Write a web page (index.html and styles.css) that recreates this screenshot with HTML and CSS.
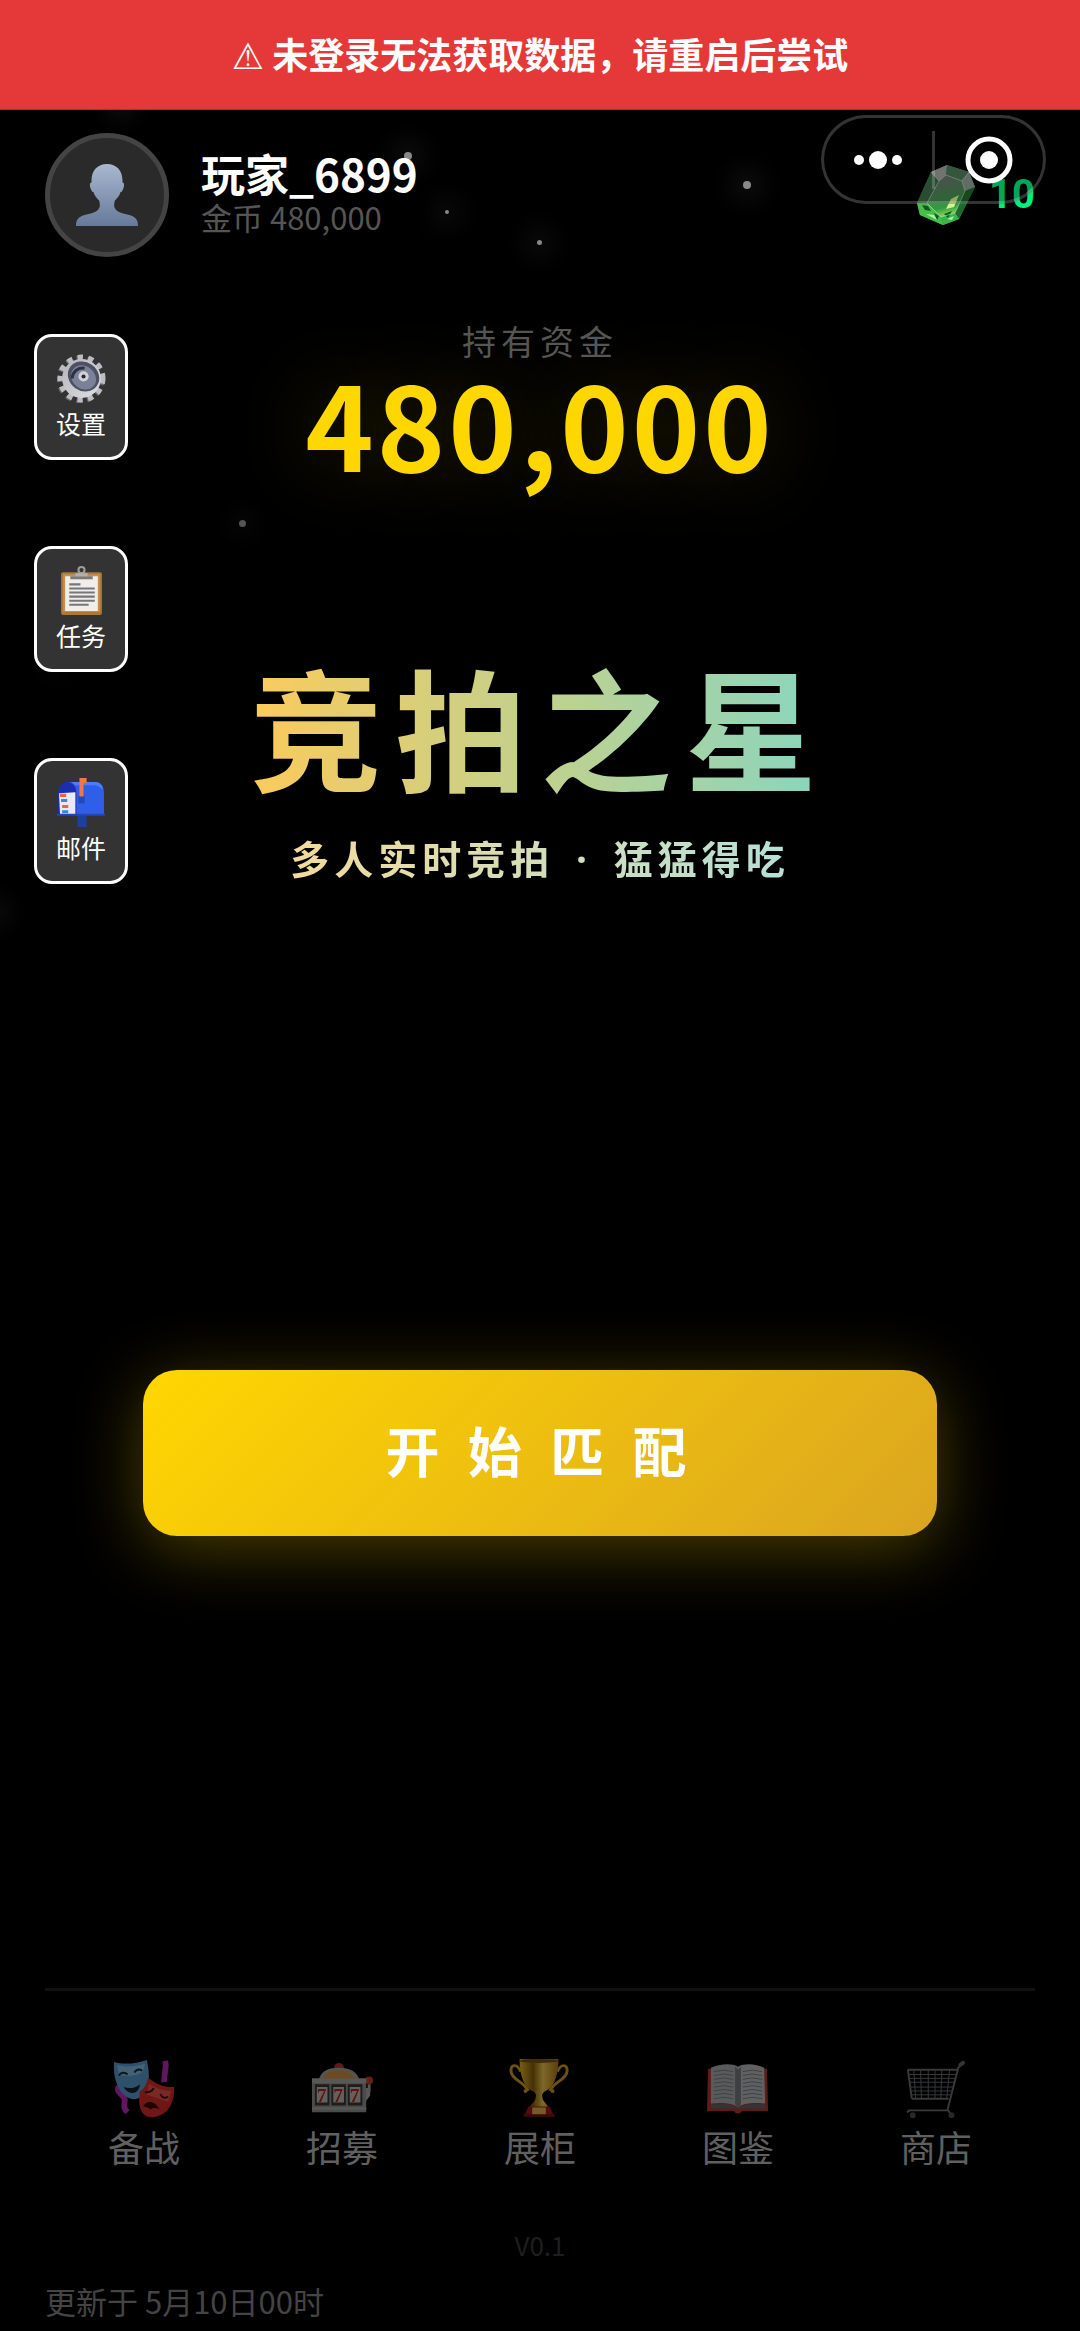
FILE: index.html
```html
<!DOCTYPE html>
<html lang="zh-CN">
<head>
<meta charset="utf-8">
<meta name="viewport" content="width=device-width, initial-scale=1">
<title>竞拍之星</title>
<link rel="stylesheet" href="styles.css">
</head>
<body>
<div class="page">
  <div class="stars" aria-hidden="true">
    <i class="star star-1"></i><i class="star star-2"></i><i class="star star-3"></i><i class="star star-4"></i>
    <i class="star star-5"></i><i class="star star-6"></i><i class="star star-7"></i><i class="star star-8"></i>
  </div>

  <div class="banner" role="alert"><span class="banner-mark">⚠</span> 未登录无法获取数据，请重启后尝试</div>

  <header class="header">
    <div class="avatar">
      <svg viewBox="0 0 64 64" aria-hidden="true">
        <defs><linearGradient id="person" x1="0" y1="0" x2="0" y2="1"><stop offset="0" stop-color="#a9b8d0"/><stop offset="1" stop-color="#67799a"/></linearGradient></defs>
        <path fill="url(#person)" d="M32 0c10 0 16 7 16 17v2c2 0 2 3 1 6-1 3-2 4-3 4-1 4-4 7-6 9-1 4-1 7 1 9 3 4 10 4 15 6 6 2 8 5 8 11H0c0-6 2-9 8-11 5-2 12-2 15-6 2-2 2-5 1-9-2-2-5-5-6-9-1 0-2-1-3-4-1-3-1-6 1-6v-2C16 7 22 0 32 0z"/>
      </svg>
    </div>
    <div class="player">
      <div class="player-name">玩家_6899</div>
      <div class="player-coins">金币 480,000</div>
    </div>
    <div class="gems">
      <svg class="gem" viewBox="0 0 58 60" aria-hidden="true">
        <defs>
          <linearGradient id="gem" x1=".6" y1="0" x2=".4" y2="1"><stop offset="0" stop-color="#7d8f86"/><stop offset=".45" stop-color="#3a8a4a"/><stop offset="1" stop-color="#2fb344"/></linearGradient>
          <linearGradient id="table" x1=".4" y1="0" x2=".6" y2="1"><stop offset="0" stop-color="#6f7274"/><stop offset=".45" stop-color="#4d8a58"/><stop offset=".75" stop-color="#2f9b3e"/><stop offset="1" stop-color="#a4e060"/></linearGradient>
        </defs>
        <path fill="url(#gem)" d="M30 0l22 7 6 15-16 32-16 6L3 50 0 38 14 7z"/>
        <path fill="#a2a5a3" d="M30 0L14 7l8 9 7-6z"/>
        <path fill="#4c7a5a" d="M30 0l22 7-7 9-16-6z"/>
        <path fill="#8f9a92" d="M52 7l6 15-10 4-3-10z"/>
        <path fill="#3c6d4a" d="M14 7l8 9L10 38H0z"/>
        <path fill="url(#table)" d="M22 16l7-6 16 6 3 10-10 22-14 4-14-14z"/>
        <path fill="#1c6a2c" d="M48 26l10-4-16 32-4-6z"/>
        <path fill="#48bd48" d="M0 38h10l14 14 2 8L3 50z"/>
        <path fill="#38b64a" d="M24 52l14-4 4 6-16 6z"/>
        <path fill="#0f5a22" d="M5 40l6 1 3 5-6-1zM17 48l5 3-2 4zM27 49l8-3-4 7z"/>
        <path fill="#d0f58c" d="M34 34l8-4-5 12-8 2z"/>
        <path fill="#a6f7a0" d="M9 49l8 1 3 5zM30 54l7-3-2 4z"/>
        <path fill="none" stroke="#d5efd5" stroke-opacity=".5" d="M22 16l7-6 16 6 3 10-10 22-14 4-14-14zM14 7l8 9M52 7l-7 9"/>
      </svg>
      <span class="gem-count">10</span>
    </div>
  </header>

  <div class="capsule">
    <button type="button" aria-label="更多">
      <svg viewBox="0 0 48 48" aria-hidden="true"><circle cx="5" cy="24" r="5"/><circle cx="24" cy="24" r="9"/><circle cx="43" cy="24" r="5"/></svg>
    </button>
    <button type="button" aria-label="关闭">
      <svg viewBox="0 0 48 48" aria-hidden="true"><circle cx="24" cy="24" r="21" fill="none" stroke="#fff" stroke-width="5"/><circle cx="24" cy="24" r="9"/></svg>
    </button>
  </div>

  <main class="stage">
    <aside class="side">
      <button type="button" class="side-button">
        <svg viewBox="0 0 48 48" aria-hidden="true">
          <defs><linearGradient id="steel" x1="0" y1="0" x2="1" y2="1"><stop offset="0" stop-color="#b4b4ba"/><stop offset="1" stop-color="#dedee3"/></linearGradient></defs>
          <circle cx="23" cy="25" r="20" fill="none" stroke="#6c6c72" stroke-width="7" stroke-dasharray="5 5"/>
          <circle cx="24" cy="24" r="20" fill="none" stroke="#bcbcc3" stroke-width="7" stroke-dasharray="5 5"/>
          <circle cx="24" cy="24" r="19" fill="url(#steel)"/>
          <ellipse cx="26" cy="22" rx="16" ry="14" fill="#4d5163" transform="rotate(35 26 22)"/>
          <ellipse cx="26" cy="23" rx="13" ry="11" fill="#7b8298" transform="rotate(40 26 23)"/>
          <path d="M15 24a10 10 0 0 1 12-10" fill="none" stroke="#2e3244" stroke-width="3"/>
          <circle cx="26" cy="22" r="5" fill="#d0d0d6"/><circle cx="26" cy="22" r="2" fill="#26262c"/>
        </svg>
        <span>设置</span>
      </button>
      <button type="button" class="side-button">
        <svg viewBox="0 0 48 48" aria-hidden="true">
          <rect x="4" y="6" width="40" height="42" rx="2" fill="#a9783a"/>
          <rect x="6" y="8" width="36" height="37" fill="#c2914d"/>
          <path fill="#f0eeea" d="M8 10h32v34H8z"/>
          <path fill="#7b7b78" d="M13 10h22v3H13z"/>
          <circle cx="24" cy="4" r="3" fill="none" stroke="#9aa096" stroke-width="2"/>
          <path fill="#b0b3ab" d="M18 7h12v3H18z"/>
          <path stroke="#77777a" stroke-width="2" d="M12 18h11M12 22h25M12 26h25M12 30h25M12 34h25M12 38h19"/>
        </svg>
        <span>任务</span>
      </button>
      <button type="button" class="side-button">
        <svg viewBox="0 0 48 48" aria-hidden="true">
          <path fill="#1d3f9e" d="M20 34h9v14h-9z"/>
          <path fill="#2f5fe8" d="M10 4h27c7 0 9 5 9 11v19l1 2H18V14z"/>
          <path fill="#4c7cff" d="M14 4h23c5 0 8 3 8 8-3-4-6-5-10-5H18z"/>
          <path fill="#1b2fae" d="M1 35V15C1 8 5 4 10 4s9 4 9 11v21z"/>
          <path fill="#e9eaf5" d="M2 15l16-1v22H3z"/>
          <path stroke="#e4664b" stroke-width="3" d="M3 17h6M5 28h6"/>
          <path stroke="#3d84dd" stroke-width="3" d="M4 22h6M5 33h6"/>
          <path fill="#2448b8" d="M21 17h6v8h-6z"/>
          <path fill="#ef7848" d="M22 0h7v5h-3v13h-4z"/>
          <path stroke="#2346bf" stroke-width="2" d="M0 36h47"/>
        </svg>
        <span>邮件</span>
      </button>
    </aside>

    <section class="hero">
      <div class="funds-label">持有资金</div>
      <div class="funds">480,000</div>
      <h1 class="title">竞拍之星</h1>
      <p class="tagline">多人实时竞拍 <span class="dot">·</span> 猛猛得吃</p>
    </section>
  </main>

  <button type="button" class="start">开 始 匹 配</button>

  <footer class="footer">
    <nav class="tabs">
      <button type="button" class="tab">
        <svg viewBox="0 0 64 64" aria-hidden="true">
          <path fill="none" stroke="#c22fc0" stroke-width="6" d="M54 2c2 9-2 12-1 22M6 28c-4 9 8 8 6 16-1 6 0 8 3 11"/>
          <path fill="#5aa2d6" d="M1 3c10 3 22 2 34-2 3 16 4 28-5 37-4 4-11 5-16 1C4 32 0 18 1 3z"/>
          <path fill="#86c4ec" d="M4 6c9 3 19 2 29-1-1 5-2 8-5 10-8 3-16 3-22 1z"/>
          <path fill="none" stroke="#152a40" stroke-width="2" d="M6 17c2-3 6-4 9-1M22 14c2-3 5-4 8-2"/>
          <path fill="#14202e" d="M11 29c6 2 12 1 17-3-1 6-4 9-8 9s-7-2-9-6z"/>
          <path fill="#dd2f2c" d="M28 33c5-3 7-8 8-14 8 7 17 10 27 10 1 14-5 30-22 31-12 1-16-12-13-27z"/>
          <path fill="#ef5548" d="M37 25c7 5 14 8 23 8l-3 11-22-7z"/>
          <path fill="none" stroke="#4c0d0d" stroke-width="2" d="M33 34c4 1 8-1 9-4M49 36c1 4 5 5 8 3"/>
          <path fill="#3d0a0a" d="M31 49c4-7 12-6 17 3-4-2-7-2-9 0-3-2-5-3-8-3z"/>
        </svg>
        <span>备战</span>
      </button>
      <button type="button" class="tab">
        <svg viewBox="0 0 64 64" aria-hidden="true">
          <circle cx="29" cy="9" r="5" fill="#cf2f2c"/>
          <path fill="#a9a8a5" d="M8 22C10 12 18 9 29 9s19 4 21 13z"/>
          <path fill="#de9140" d="M12 21c3-7 9-9 17-9s14 3 17 9z"/>
          <path fill="#aeb0b0" d="M56 30h5v8l-5 6z"/><path fill="none" stroke="#aaa" stroke-width="3" d="M60 34v-8"/>
          <circle cx="60" cy="22" r="4" fill="#d83a35"/>
          <path fill="#949593" d="M1 20h56v35H1z"/>
          <path fill="#b0b0ad" d="M1 20h56v5H1zM1 50h56v2H1z"/>
          <path fill="#3a3b3b" d="M4 26h15v22H4zM21 26h15v22H21zM38 26h15v22H38z"/>
          <path fill="#c4c2be" d="M6 29h11v16H6zM23 29h11v16H23zM40 29h11v16H40z"/>
          <g class="reel"><text x="11" y="44">7</text><text x="28" y="44">7</text><text x="45" y="44">7</text></g>
        </svg>
        <span>招募</span>
      </button>
      <button type="button" class="tab">
        <svg viewBox="0 0 64 64" aria-hidden="true">
          <defs><linearGradient id="gold"><stop offset="0" stop-color="#f0bc2b"/><stop offset=".35" stop-color="#8d620c"/><stop offset=".6" stop-color="#f8d052"/><stop offset="1" stop-color="#b47e12"/></linearGradient></defs>
          <path fill="none" stroke="#d8a125" stroke-width="3" d="M12 13c-4-9-10-7-10-1 0 9 13 11 18 21M50 13c4-9 10-7 10-1 0 9-13 11-18 21"/>
          <path fill="url(#gold)" d="M11 0h40c0 16-4 30-15 34l-2 3 1 5 6 8H21l6-8 1-5-2-3C15 30 11 16 11 0z"/>
          <ellipse cx="31" cy="2" rx="20" ry="2" fill="#805a10"/>
          <circle cx="17" cy="33" r="2" fill="#d8a125"/><circle cx="45" cy="33" r="2" fill="#d8a125"/>
          <path fill="#a3191c" d="M20 49h22l4 9H16z"/><path fill="#6f1114" d="M15 57h32v3H15z"/>
          <path fill="#e5b74e" d="M24 50h14v7H24z"/>
        </svg>
        <span>展柜</span>
      </button>
      <button type="button" class="tab">
        <svg viewBox="0 0 64 64" aria-hidden="true">
          <path fill="#b93830" d="M1 10h61l1 44H36c-2 3-6 3-8 0H0z"/>
          <path fill="#66696c" d="M4 47c12-1 22-1 28 4 6-5 16-5 28-4v4H4z"/>
          <path fill="#b2b4b6" d="M4 9c9-4 22-5 28-1v42c-6-5-18-5-28-4z"/>
          <path fill="#bfc0c2" d="M32 8c7-4 19-3 27 1l1 37c-11-1-22-1-28 4z"/>
          <path fill="#7b7e81" d="M29 8l3 3 3-3v39l-3 4-3-4z"/>
          <path fill="none" stroke="#7c7f83" d="M7 13q11-3 20 0M7 17q11-3 20 0M7 21q11-3 20 0M7 25q11-3 20 0M7 29q11-3 20 0M7 33q11-3 20 0M7 37q11-3 20 0M7 41q11-3 20 0M37 13q9-3 20 0M37 17q9-3 20 0M37 21q9-3 20 0M37 25q9-3 20 0M37 29q9-3 20 0M37 33q9-3 20 0M37 37q9-3 20 0M37 41q9-3 20 0"/>
        </svg>
        <span>图鉴</span>
      </button>
      <button type="button" class="tab">
        <svg viewBox="0 0 64 64" aria-hidden="true">
          <g fill="none" stroke="#707276">
            <path stroke-width="2" d="M3 11h52M7 41h38M3 53h41M2 55l3-2M3 11l4 30"/>
            <path d="M4 16h49M5 20h47M5 24h46M6 29h43M6 33h42M7 37h40M9 11l2 30M16 11l1 30M24 11v30M31 11v30M38 11l-1 30M46 11l-3 30"/>
            <path stroke-width="2" d="M60 4l-5 5-11 43 3 5"/>
          </g>
          <path stroke="#66686b" stroke-width="4" stroke-linecap="round" d="M57 6l3-2"/>
          <circle cx="8" cy="58" r="3" fill="#4e5052"/><circle cx="48" cy="58" r="3" fill="#4e5052"/>
        </svg>
        <span>商店</span>
      </button>
    </nav>
    <div class="version">V0.1</div>
    <div class="updated">更新于 5月10日00时</div>
  </footer>
</div>
</body>
</html>
```
FILE: styles.css
```css
* { box-sizing: border-box; }

body {
  margin: 0;
  background: #000;
  color: #fff;
  font-family: "Noto Sans CJK SC", sans-serif;
}

button {
  margin: 0;
  padding: 0;
  border: 0;
  background: none;
  color: inherit;
  font: inherit;
}

svg { display: block; }

.page {
  position: relative;
  display: flex;
  flex-direction: column;
  min-height: 100vh;
  overflow: hidden;
}

/* Star field behind the content */
.stars { position: absolute; inset: 0; }

.star {
  position: absolute;
  width: 8px;
  height: 8px;
  border-radius: 50%;
  background: #888;
  box-shadow: 0 0 28px 6px rgba(255, 255, 255, .16);
}

.star-1 { left: 404px; top: 152px; }
.star-2 { left: 445px; top: 210px; width: 4px; height: 4px; }
.star-3 { left: 537px; top: 240px; width: 5px; height: 5px; }
.star-4 { left: 743px; top: 181px; }
.star-5 { left: 239px; top: 520px; width: 7px; height: 7px; background: #555; box-shadow: 0 0 24px 4px rgba(255, 255, 255, .1); }
.star-6 { left: 52px; top: 668px; width: 4px; height: 4px; background: #444; box-shadow: 0 0 24px 4px rgba(255, 255, 255, .08); }
.star-7 { left: -8px; top: 908px; box-shadow: 0 0 24px 6px rgba(255, 255, 255, .12); }
.star-8 { left: 117px; top: 101px; box-shadow: 0 0 24px 6px rgba(255, 255, 255, .14); }

.banner {
  position: relative;
  padding: 27px 24px 30px;
  border-bottom: 1px solid #70494a;
  background: #e53939;
  font-size: 36px;
  font-weight: 700;
  line-height: 52px;
  text-align: center;
}

.banner-mark {
  font-family: "DejaVu Sans", sans-serif;
  line-height: 1;
}

.header {
  position: relative;
  display: flex;
  align-items: center;
  padding: 23px 45px 24px;
}

.avatar {
  display: grid;
  place-items: center;
  width: 124px;
  height: 124px;
  border: 5px solid #444;
  border-radius: 50%;
  background: #2a2a2a;
}

.avatar svg { width: 62px; height: 62px; }

.player { flex: 1; margin-left: 32px; }

.player-name {
  font-size: 44px;
  font-weight: 700;
  line-height: 48px;
}

.player-coins {
  margin-bottom: 4px;
  color: #555;
  font-size: 31px;
  line-height: 40px;
}

.gems {
  display: flex;
  align-items: center;
  gap: 14px;
}

.gem { width: 58px; height: 60px; }

.gem-count {
  color: #00f07e;
  font-family: Roboto, sans-serif;
  font-size: 40px;
  font-weight: 700;
  line-height: 60px;
}

/* Host controls float over the header */
.capsule {
  position: absolute;
  top: 115px;
  right: 34px;
  display: flex;
  align-items: center;
  width: 225px;
  height: 89px;
  border: 3px solid rgba(255, 255, 255, .2);
  border-radius: 45px;
  background: rgba(0, 0, 0, .3);
}

.capsule button {
  display: grid;
  flex: 1;
  place-items: center;
  height: 58px;
}

.capsule button + button { border-left: 3px solid rgba(255, 255, 255, .2); }

.capsule svg { width: 48px; height: 48px; fill: #fff; }

.stage {
  position: relative;
  display: grid;
  margin-top: 40px;
}

.side,
.hero { grid-area: 1 / 1; }

.side {
  z-index: 1;
  display: flex;
  flex-direction: column;
  gap: 86px;
  justify-self: start;
  padding: 13px 0 0 34px;
}

.side-button {
  display: flex;
  flex-direction: column;
  align-items: center;
  gap: 2px;
  width: 94px;
  height: 126px;
  padding-top: 17px;
  border: 3px solid #fff;
  border-radius: 18px;
  background: #333;
  font-size: 25px;
  line-height: 36px;
}

.side-button svg { width: 49px; height: 49px; }

.hero {
  padding-bottom: 34px;
  text-align: center;
}

.funds-label {
  color: #555;
  font-size: 34px;
  letter-spacing: 5px;
  line-height: 40px;
}

.funds {
  color: #ffd700;
  font-size: 116px;
  font-weight: 700;
  letter-spacing: 3px;
  line-height: 120px;
  text-shadow: 0 0 84px rgba(255, 215, 0, .2);
}

.title,
.tagline {
  width: fit-content;
  margin: 0 auto;
  background-clip: text;
  -webkit-background-clip: text;
  color: transparent;
  font-weight: 700;
}

.title {
  margin-top: 164px;
  background-image: linear-gradient(90deg, #fbcb5b, #88d6bf);
  font-size: 132px;
  letter-spacing: 13px;
  line-height: 160px;
}

.tagline {
  margin-top: 26px;
  background-image: linear-gradient(90deg, #f3db9b, #b5e0d6);
  font-size: 39px;
  letter-spacing: 5px;
  line-height: 52px;
}

.dot {
  margin: 0 8px;
  font-family: "Noto Sans", sans-serif;
  line-height: 1;
}

.start {
  position: relative;
  align-self: center;
  width: 794px;
  max-width: calc(100% - 90px);
  margin: auto 0;
  padding: 40px 0 46px;
  border-radius: 34px;
  background: linear-gradient(135deg, #ffd700, #daa520);
  box-shadow: 0 12px 68px rgba(255, 215, 0, .3);
  font-size: 54px;
  font-weight: 700;
  letter-spacing: 8px;
  line-height: 80px;
}

.footer {
  position: relative;
  padding: 0 45px 10px;
}

.tabs {
  display: grid;
  grid-template-columns: repeat(5, 1fr);
  padding: 68px 0 55px;
  border-top: 3px solid #111;
}

.tab {
  display: flex;
  flex-direction: column;
  align-items: center;
  gap: 1px;
  color: #606060;
  font-size: 36px;
  line-height: 48px;
}

.tab svg { width: 62px; height: 62px; opacity: .5; }

.reel {
  fill: #c9201f;
  font-family: "Liberation Serif", serif;
  font-size: 20px;
  font-weight: 700;
  text-anchor: middle;
}

.version {
  color: #1e1e1e;
  font-size: 26px;
  line-height: 40px;
  text-align: center;
}

.updated {
  margin-top: 16px;
  color: #444;
  font-size: 31px;
  line-height: 40px;
}
```
